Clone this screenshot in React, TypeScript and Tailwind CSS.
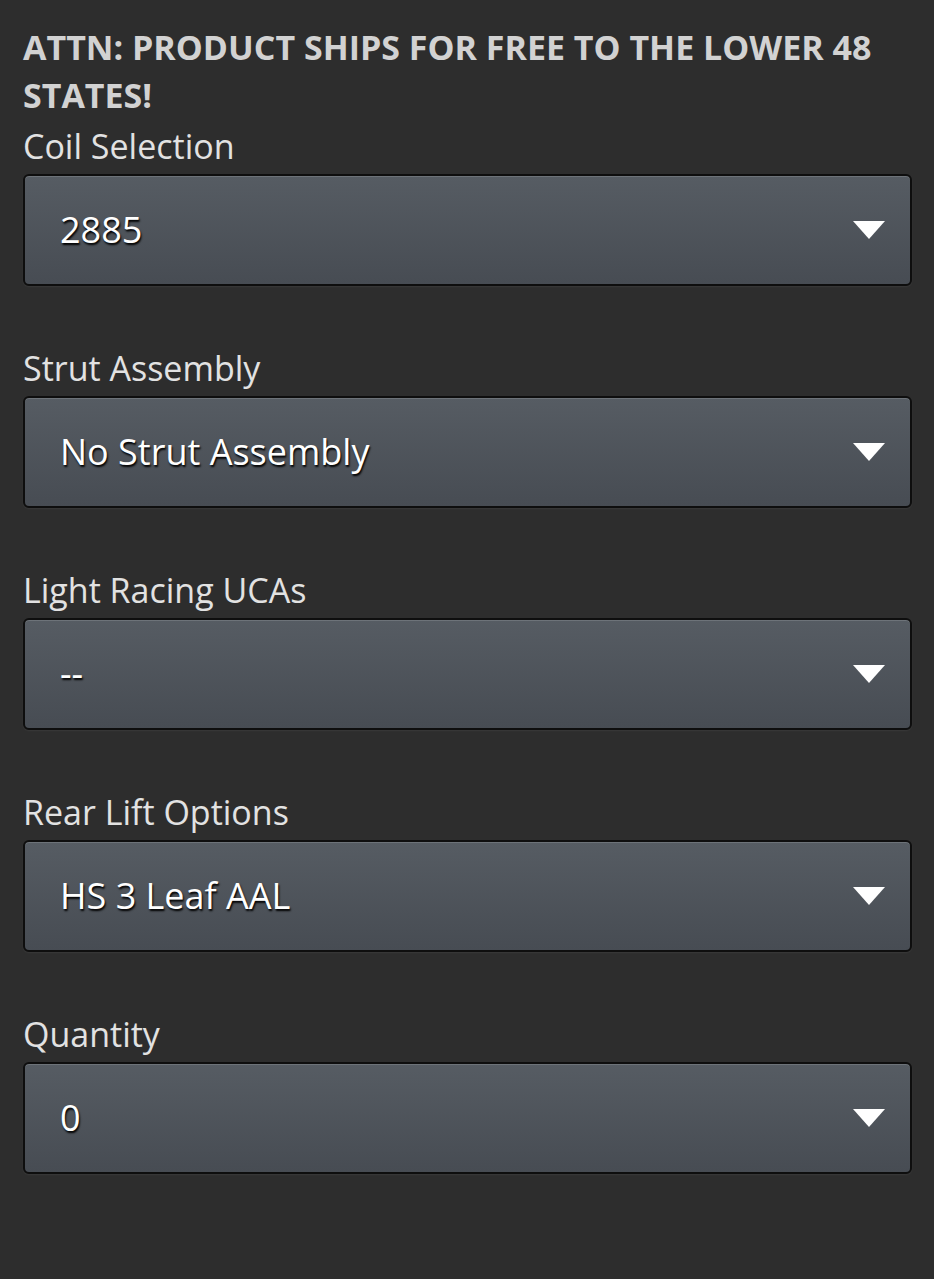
const fields = [
  { label: "Coil Selection", value: "2885" },
  { label: "Strut Assembly", value: "No Strut Assembly" },
  { label: "Light Racing UCAs", value: "--" },
  { label: "Rear Lift Options", value: "HS 3 Leaf AAL" },
  { label: "Quantity", value: "0" },
];

const Caret = () => (
  <svg width="32" height="18" viewBox="0 0 32 18" className="shrink-0">
    <path d="M0 0 H32 L16 18 Z" fill="#ffffff" />
  </svg>
);

const SelectField = ({ label, value }: { label: string; value: string }) => (
  <div className="mb-[62px]">
    <label className="block text-[34px] leading-[40px] text-[#e2e2e2] mb-2">{label}</label>
    <div className="flex h-[112px] items-center justify-between rounded-[6px] border-2 border-[#0e0e0e] bg-gradient-to-b from-[#565c63] to-[#474c53] pl-[35px] pr-[25px] shadow-[inset_0_1px_0_rgba(255,255,255,0.14),0_1px_2px_rgba(255,255,255,0.06)]">
      <span className="text-[36px] text-white [text-shadow:1px_2px_2px_#000]">{value}</span>
      <Caret />
    </div>
  </div>
);

export default function App() {
  return (
    <div
      className="min-h-[1279px] w-full bg-[#2d2d2d] px-[23px] pt-[23px]"
      style={{ fontFamily: '"Open Sans", "Liberation Sans", sans-serif' }}
    >
      <div className="w-[889px]">
        <p className="text-[34px] font-bold uppercase leading-[48px] text-[#d2d2d2]">
          ATTN: Product ships for free to the lower 48 states!
        </p>
        <div className="mt-[7px]">
          {fields.map((f) => (
            <SelectField key={f.label} label={f.label} value={f.value} />
          ))}
        </div>
      </div>
    </div>
  );
}
